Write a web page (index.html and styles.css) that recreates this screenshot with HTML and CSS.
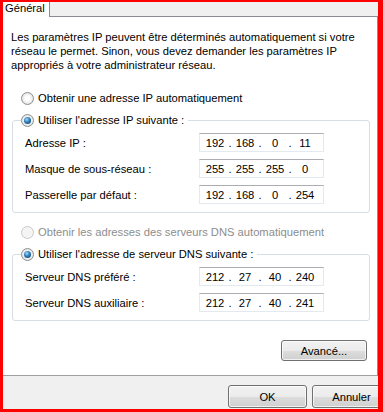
FILE: index.html
```html
<!DOCTYPE html>
<html lang="fr">
<head>
  <meta charset="UTF-8">
  <meta name="viewport" content="width=device-width, initial-scale=1.0">
  <title>Propriétés de : Protocole Internet version 4</title>
  <link rel="stylesheet" href="styles.css">
</head>
<body>

<div class="frame">
  <div class="tabs">
    <div class="tab">Général</div>
  </div>

  <div class="panel">
    <p class="intro">Les paramètres IP peuvent être déterminés automatiquement si votre<br>réseau le permet. Sinon, vous devez demander les paramètres IP<br>appropriés à votre administrateur réseau.</p>

    <div class="option"><span class="radio"></span>Obtenir une adresse IP automatiquement</div>

    <fieldset class="group">
      <legend class="option"><span class="radio checked"></span>Utiliser l'adresse IP suivante :</legend>
      <div class="row">
        <label>Adresse IP :</label>
        <div class="ip"><span>192</span><i>.</i><span>168</span><i>.</i><span>0</span><i>.</i><span>11</span></div>
      </div>
      <div class="row">
        <label>Masque de sous-réseau :</label>
        <div class="ip"><span>255</span><i>.</i><span>255</span><i>.</i><span>255</span><i>.</i><span>0</span></div>
      </div>
      <div class="row">
        <label>Passerelle par défaut :</label>
        <div class="ip"><span>192</span><i>.</i><span>168</span><i>.</i><span>0</span><i>.</i><span>254</span></div>
      </div>
    </fieldset>

    <div class="option disabled"><span class="radio"></span>Obtenir les adresses des serveurs DNS automatiquement</div>

    <fieldset class="group">
      <legend class="option"><span class="radio checked"></span>Utiliser l'adresse de serveur DNS suivante :</legend>
      <div class="row">
        <label>Serveur DNS préféré :</label>
        <div class="ip"><span>212</span><i>.</i><span>27</span><i>.</i><span>40</span><i>.</i><span>240</span></div>
      </div>
      <div class="row">
        <label>Serveur DNS auxiliaire :</label>
        <div class="ip"><span>212</span><i>.</i><span>27</span><i>.</i><span>40</span><i>.</i><span>241</span></div>
      </div>
    </fieldset>

    <div class="actions">
      <button type="button" class="btn advanced">Avancé...</button>
    </div>
  </div>

  <div class="footer">
    <button type="button" class="btn">OK</button>
    <button type="button" class="btn cancel">Annuler</button>
  </div>
</div>

</body>
</html>
```

FILE: styles.css
```css
body {
  margin: 0;
  font-family: "Liberation Sans Narrow", "Liberation Sans", Arial, sans-serif;
  font-size: 11.2px;
  color: #000;
}

.frame {
  width: 383px;
  height: 412px;
  box-sizing: border-box;
  border: solid #f00;
  border-width: 2px 5px 3px 3px;
  background: #f0f0f0;
  display: flex;
  flex-direction: column;
  overflow: hidden;
}

.tabs {
  flex: none;
  height: 15px;
  box-sizing: border-box;
  display: flex;
  background: #f0f0f0;
  border-bottom: 1px solid #898c95;
}

.tab {
  background: #fff;
  height: 15px;
  width: 47px;
  padding-left: 2px;
  line-height: 13px;
  border-right: 1px solid #898c95;
  box-sizing: border-box;
}

.panel {
  flex: none;
  height: 359px;
  box-sizing: border-box;
  overflow: hidden;
  background: #fff;
  border-right: 1px solid #898c95;
  border-bottom: 1px solid #a0a0a0;
  padding: 13px 7px 0 8px;
  display: flex;
  flex-direction: column;
}

.intro {
  margin: 0;
  line-height: 14px;
  white-space: nowrap;
}

.option {
  display: flex;
  align-items: center;
  height: 16px;
  margin: 18px 0 0 10px;
  white-space: nowrap;
}

.option.disabled {
  color: #8d8d8d;
  margin-top: 11px;
}

.radio {
  width: 11px;
  height: 11px;
  border: 1px solid #8e8f8f;
  border-radius: 50%;
  margin-right: 4px;
  background: radial-gradient(circle at 50% 50%, #fff 30%, #e4e4e4 70%, #cfcfcf 100%);
  position: relative;
  flex: none;
}

.option.disabled .radio {
  border-color: #c8c8c8;
  background: #f4f4f4;
}

.radio.checked::after {
  content: "";
  position: absolute;
  left: 2px;
  top: 2px;
  width: 7px;
  height: 7px;
  border-radius: 50%;
  background: radial-gradient(circle at 40% 35%, #9fdcff 0%, #2d7cbc 45%, #0e3455 100%);
}

.group {
  margin: 6px 0 0 1px;
  padding: 5px 0 8px 12px;
  border: 1px solid #d5dfe5;
  border-radius: 3px;
}

.group legend {
  margin: 0 0 0 -4px;
  padding: 0 4px 0 0;
}

.row {
  display: flex;
  align-items: center;
  height: 19px;
}

.row + .row {
  margin-top: 7px;
}

.row label {
  width: 174px;
}

.ip {
  width: 125px;
  height: 19px;
  box-sizing: border-box;
  border: 1px solid #e3e9ef;
  border-top-color: #abadb3;
  display: flex;
  align-items: center;
  padding-left: 3px;
}

.ip span {
  width: 24px;
  text-align: center;
}

.ip i {
  font-style: normal;
  width: 6px;
  text-align: center;
}

.actions {
  display: flex;
  justify-content: flex-end;
  margin-top: 19px;
  padding-right: 3px;
}

.btn {
  font: inherit;
  color: #000;
  height: 23px;
  width: 79px;
  border: 1px solid #707070;
  border-radius: 3px;
  background: linear-gradient(#f2f2f2 0%, #ebebeb 50%, #dddddd 51%, #cfcfcf 100%);
  box-shadow: inset 0 0 0 1px rgba(255, 255, 255, 0.7);
  padding: 0;
  cursor: pointer;
}

.btn.advanced {
  width: 86px;
  height: 21px;
}

.footer {
  flex: none;
  height: 33px;
  display: flex;
  justify-content: flex-end;
  align-items: flex-start;
  padding-top: 9px;
  box-sizing: border-box;
}

.footer .btn + .btn {
  margin-left: 5px;
}

.btn.cancel {
  margin-right: -13px;
}
```
